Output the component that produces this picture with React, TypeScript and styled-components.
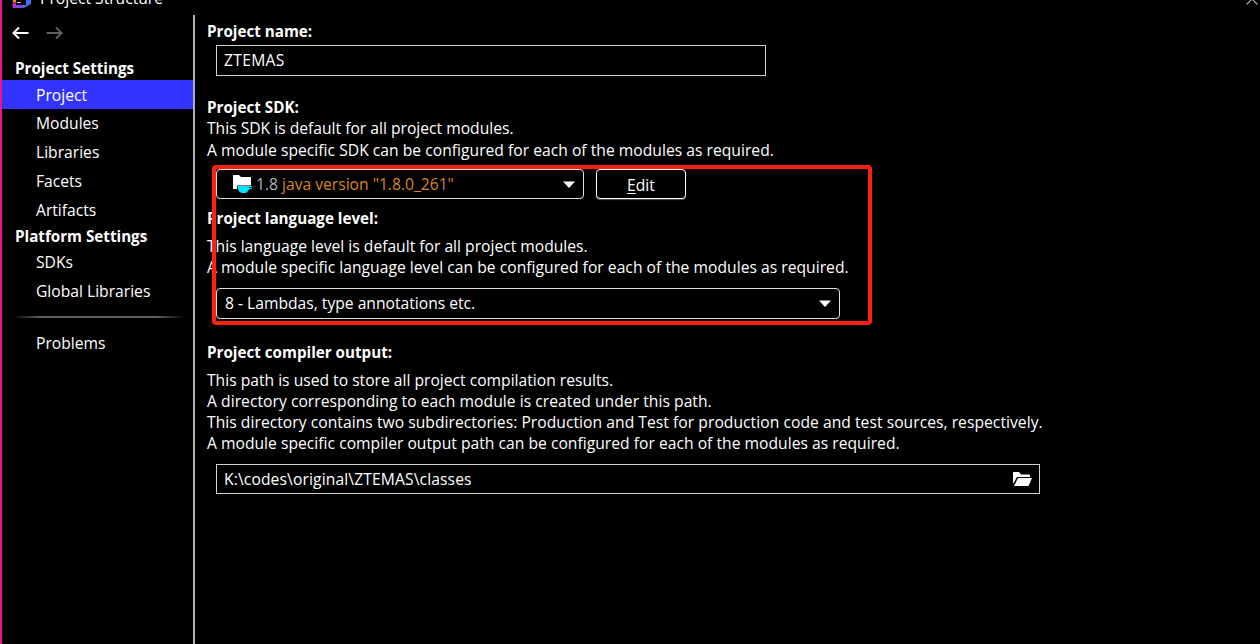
import React, { useState } from 'react';
import styled, { createGlobalStyle } from 'styled-components';

/* -------------- MAIN --------------- */

const GlobalStyle = createGlobalStyle`
  body {
    margin: 0;
    background-color: #000000;
    color: #ffffff;
    font-family: "Open Sans", "Noto Sans", sans-serif;
    font-size: 15.65px;
    line-height: 21px;
  }
`;

const Window = styled.div`
  display: flex;
  flex-direction: column;
  width: 1260px;
  height: 644px;
  box-sizing: border-box;
  border-left: 2px solid #e8148c;
  background-color: #000000;
  overflow: hidden;
`;

const TitleBar = styled.div`
  display: flex;
  align-items: flex-end;
  height: 9px;
  margin-bottom: 6px;
  padding: 0 2px 0 10px;
  overflow: hidden;

  svg {
    flex: none;
  }
`;

const Title = styled.div`
  flex: 1;
  margin-left: 8px;
`;

const Content = styled.div`
  display: flex;
  flex: 1;
`;

/* -------------- SIDEBAR --------------- */

const Sidebar = styled.div`
  display: flex;
  flex-direction: column;
  width: 193px;
  box-sizing: border-box;
  border-right: 2px solid #b0b0b0;
`;

const History = styled.div`
  display: flex;
  gap: 17px;
  padding: 11px 0 0 10px;
  height: 32px;

  svg {
    display: block;
  }
`;

const GroupTitle = styled.div<{ height: number; top?: number }>`
  height: ${props => props.height}px;
  margin-top: ${props => props.top || 0}px;
  padding-left: 13px;
  font-size: 15.2px;
  font-weight: 700;
`;

const Item = styled.div<{ height: number; selected?: boolean }>`
  height: ${props => props.height}px;
  line-height: ${props => (props.height < 29 ? 29 : 31)}px;
  padding-left: 34px;
  background-color: ${props => (props.selected ? '#3333ff' : 'transparent')};
  cursor: default;
`;

const Divider = styled.div`
  height: 2px;
  margin: 11px 7px 10px 10px;
  background: linear-gradient(
    to right,
    transparent,
    #606060 17%,
    #606060 83%,
    transparent
  );
`;

/* -------------- FORM --------------- */

const Form = styled.div`
  display: flex;
  flex-direction: column;
  align-items: flex-start;
  padding: 6px 0 0 12px;
`;

const Section = styled.div<{ top?: number }>`
  display: flex;
  flex-direction: column;
  align-items: flex-start;
  margin-top: ${props => props.top || 0}px;
`;

const Label = styled.div<{ gap?: number }>`
  margin-bottom: ${props => props.gap || 0}px;
  font-size: 15.2px;
  font-weight: 700;
  white-space: nowrap;
`;

const Line = styled.div<{ spacing?: number; gap?: number }>`
  margin-bottom: ${props => props.gap || 0}px;
  letter-spacing: ${props => props.spacing || 0}px;
  white-space: nowrap;
`;

const Field = styled.div<{ width: number; height: number }>`
  display: flex;
  align-items: center;
  justify-content: space-between;
  width: ${props => props.width}px;
  height: ${props => props.height}px;
  margin-left: 9px;
  padding: 0 7px;
  box-sizing: border-box;
  border: 1px solid #d0d0d0;
`;

const Combo = styled(Field)`
  padding: 0 8px;
  border-color: #e0e0e0;
  border-radius: 4px;
`;

const Row = styled.div`
  display: flex;
  gap: 12px;
`;

const SdkValue = styled.div`
  display: flex;
  align-items: center;
  padding-left: 8px;
  color: #b4b4bc;

  svg {
    margin-right: 4px;
  }
`;

const SdkVersion = styled.span`
  margin-left: 4px;
  color: #d98718;
`;

const Button = styled.button`
  width: 90px;
  height: 30px;
  padding: 2px 0 0;
  border: 1px solid #ffffff;
  border-radius: 4px;
  background-color: #000000;
  box-shadow: 0 1px 1px #555555;
  color: #ffffff;
  font: inherit;

  u {
    text-underline-offset: 2px;
  }
`;

// the marker drawn over the SDK and language level settings
const Marker = styled.div`
  position: absolute;
  left: 212px;
  top: 165px;
  width: 660px;
  height: 160px;
  box-sizing: border-box;
  border: 4px solid #ff2010;
  border-radius: 4px;
  pointer-events: none;
`;

/* -------------- ICONS --------------- */

const Logo = () => (
  <svg width="20" height="20" viewBox="0 0 20 20">
    <path d="M0 0h8v12L1 14z" fill="#ff7a1a" />
    <path d="M0 15l5-2 5 3-1 3H1z" fill="#b02fc8" />
    <path d="M8 2l11 4v9l-7 4H7z" fill="#3f6cf0" />
    <path d="M5 17l6-1 1 3H5z" fill="#7a48e0" />
    <rect x="4" y="2" width="10" height="14" fill="#08080c" />
    <rect x="5" y="13" width="4" height="1" fill="#c8c8c8" />
  </svg>
);

const CloseIcon = () => (
  <svg width="12" height="12" viewBox="0 0 12 12">
    <path d="M.5 7.500L6 2l5.500 5.500" fill="none" stroke="#a8a8a8" strokeWidth="1.200" />
  </svg>
);

const Arrow = (props: { color: string; flip?: boolean }) => (
  <svg width="17" height="14" viewBox="0 0 17 14">
    <path
      d="M16.500 7H1.500M7 1.500L1.500 7L7 12.500"
      transform={props.flip ? 'matrix(-1 0 0 1 17 0)' : undefined}
      fill="none"
      stroke={props.color}
      strokeWidth="2"
    />
  </svg>
);

const Caret = () => (
  <svg width="12" height="7" viewBox="0 0 12 7">
    <path d="M0 .5h12L6 7z" fill="#ffffff" />
  </svg>
);

const JdkIcon = () => (
  <svg width="19" height="18" viewBox="0 0 19 18">
    <path d="M0 0h6l2 2h10v12H0z" fill="#ffffff" />
    <path d="M4 10.500h15v3.500l-3 4H6L4 13.500z" fill="#000000" />
    <path
      d="M4.500 11h14.200v2.500l-3.200 1.500-1.500 2.500-2 .5H9l-2.500-1L5 14z"
      fill="#00e4ff"
    />
    <rect x="16" y="12" width="1.500" height="1" fill="#000000" />
  </svg>
);

const FolderIcon = () => (
  <svg width="19" height="14" viewBox="0 0 19 14">
    <path d="M0 0h6l2 2.500h9V5H4L0 12z" fill="#ffffff" />
    <path d="M5 6h14l-3.500 8H1z" fill="#ffffff" />
  </svg>
);

/* -------------- BODY --------------- */

const App = () => {
  const [page, setPage] = useState('Project');

  const renderItem = (name: string, height = 29) => (
    <Item
      key={name}
      height={height}
      selected={page === name}
      onClick={() => setPage(name)}
    >
      {name}
    </Item>
  );

  return (
    <>
      <GlobalStyle />
      <Window>
        <TitleBar>
          <Logo />
          <Title>Project Structure</Title>
          <CloseIcon />
        </TitleBar>
        <Content>
          <Sidebar>
            <History>
              <Arrow color="#ffffff" />
              <Arrow color="#606060" flip />
            </History>
            <GroupTitle height={22}>Project Settings</GroupTitle>
            {renderItem('Project')}
            {renderItem('Modules', 28)}
            {['Libraries', 'Facets', 'Artifacts'].map(name =>
              renderItem(name)
            )}
            <GroupTitle height={21} top={2}>
              Platform Settings
            </GroupTitle>
            {renderItem('SDKs')}
            {renderItem('Global Libraries')}
            <Divider />
            {renderItem('Problems')}
          </Sidebar>

          <Form>
            <Section>
              <Label gap={3}>Project name:</Label>
              <Field width={550} height={31}>
                <Line spacing={0.3}>ZTEMAS</Line>
              </Field>
            </Section>

            <Section top={21}>
              <Label>Project SDK:</Label>
              <Line gap={1}>This SDK is default for all project modules.</Line>
              <Line gap={8} spacing={0.02}>
                A module specific SDK can be configured for each of the modules
                as required.
              </Line>
              <Row>
                <Combo width={368} height={30}>
                  <SdkValue>
                    <JdkIcon />
                    1.8
                    <SdkVersion>java version "1.8.0_261"</SdkVersion>
                  </SdkValue>
                  <Caret />
                </Combo>
                <Button>
                  <u>E</u>dit
                </Button>
              </Row>
            </Section>

            <Section top={9}>
              <Label gap={7}>Project language level:</Label>
              <Line>
                This language level is default for all project modules.
              </Line>
              <Line gap={10} spacing={0.025}>
                A module specific language level can be configured for each of
                the modules as required.
              </Line>
              <Combo width={624} height={31}>
                <Line>8 - Lambdas, type annotations etc.</Line>
                <Caret />
              </Combo>
            </Section>

            <Section top={23}>
              <Label gap={7}>Project compiler output:</Label>
              <Line>
                This path is used to store all project compilation results.
              </Line>
              <Line spacing={0.04}>
                A directory corresponding to each module is created under this
                path.
              </Line>
              <Line spacing={0.04}>
                This directory contains two subdirectories: Production and Test
                for production code and test sources, respectively.
              </Line>
              <Line gap={10} spacing={0.02}>
                A module specific compiler output path can be configured for
                each of the modules as required.
              </Line>
              <Field width={824} height={30}>
                <Line spacing={0.12}>K:\codes\original\ZTEMAS\classes</Line>
                <FolderIcon />
              </Field>
            </Section>
          </Form>
        </Content>
      </Window>
      <Marker />
    </>
  );
};

export default App;
